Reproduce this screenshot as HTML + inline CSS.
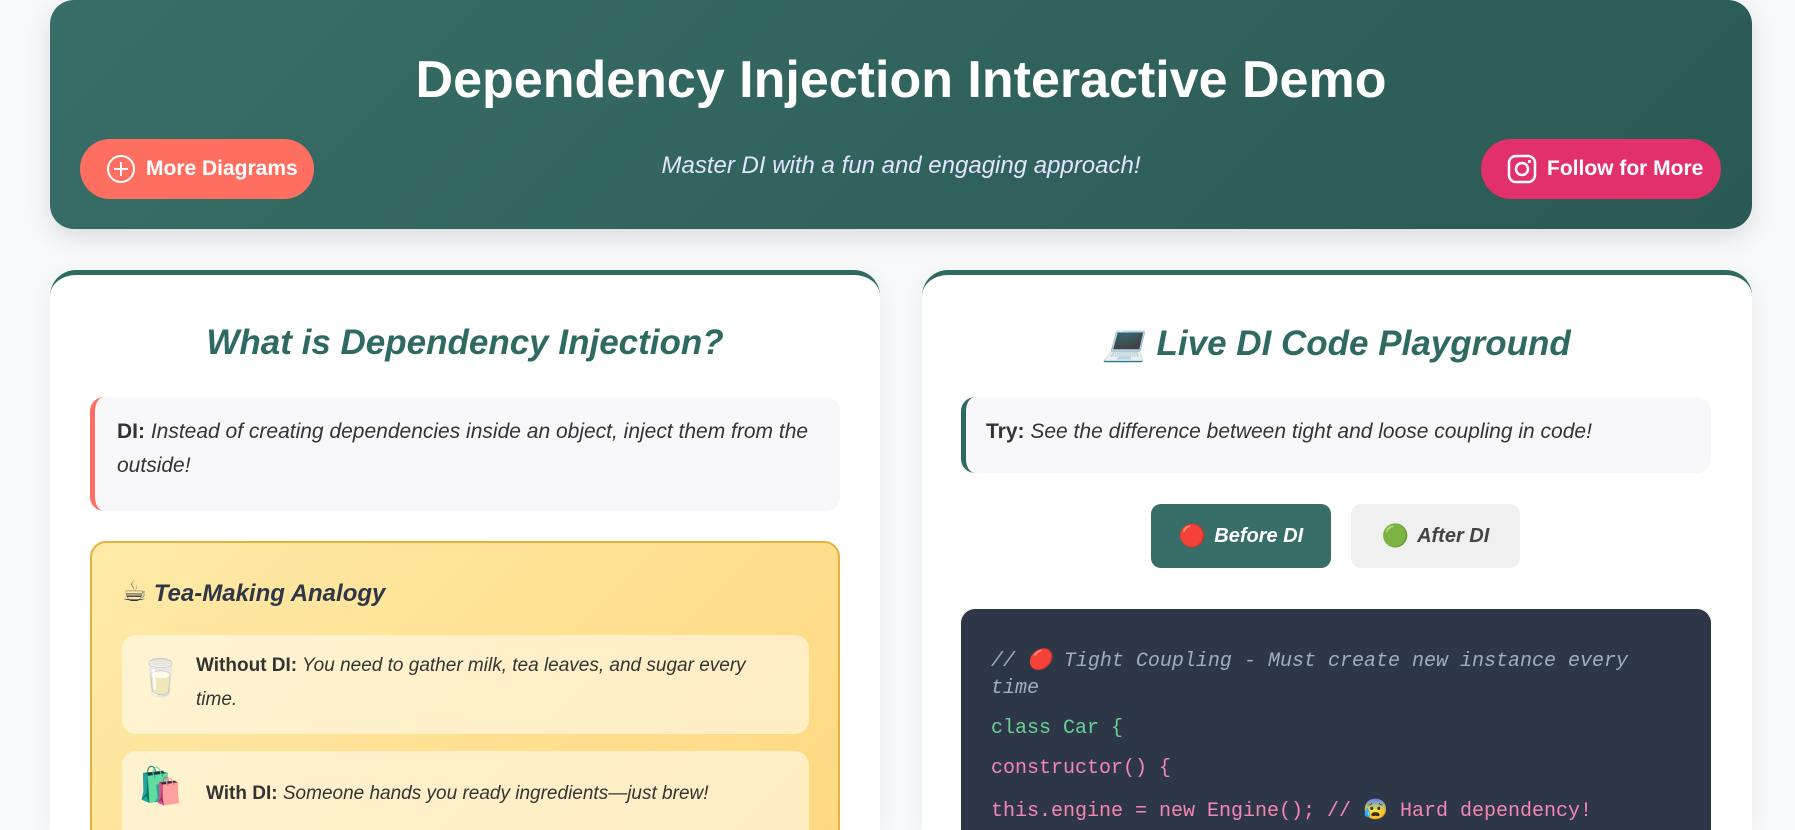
<!DOCTYPE html>
<html style="width:1795px;height:830px;overflow:hidden"><head><meta charset="utf-8"><style>
*{box-sizing:border-box;margin:0;padding:0}
body{width:1795px;height:830px;overflow:hidden;background:#f7f9fb;font-family:"Liberation Sans","DejaVu Sans",sans-serif;position:relative}
.abs{position:absolute}
.header{left:50px;top:0;width:1702px;height:229px;border-radius:24px;background:linear-gradient(135deg,#376e67,#2b5953);box-shadow:0 8px 24px rgba(0,0,0,.12)}
.title{left:0;width:1702px;top:50px;text-align:center;color:#fff;font-weight:bold;font-size:52px}
.btn{height:60px;border-radius:30px;color:#fff;font-weight:bold;font-size:21px;display:flex;align-items:center;gap:10px;padding-left:26px}
.sub{left:0;width:1702px;top:152px;text-align:center;color:#e3e4ff;font-style:italic;font-size:24px}
.card{background:#fff;border-radius:26px 26px 0 0;border-top:5px solid #2f6a62;box-shadow:0 4px 20px rgba(0,0,0,.06);overflow:hidden}
h2{position:absolute;text-align:center;color:#2f6a62;font-size:35px;font-weight:bold;font-style:italic}
.box{background:#f8f8fb;border-radius:14px;font-size:20px;color:#333;line-height:34px;font-style:italic}
.box b{font-style:normal}
.code{background:#2d3748;border-radius:14px 14px 0 0;font-family:"Liberation Mono",monospace;font-size:20px}
.code div{position:absolute;left:30px;white-space:nowrap}
</style></head><body>
<div class="abs header">
 <div class="abs title">Dependency Injection Interactive Demo</div>
 <div class="abs btn" style="left:30px;top:139px;width:234px;background:#ff6f61"><svg width="30" height="30" viewBox="0 0 30 30"><circle cx="15" cy="15" r="13" fill="none" stroke="#fff" stroke-width="2"/><path d="M15 8v14M8 15h14" stroke="#fff" stroke-width="2"/></svg>More Diagrams</div>
 <div class="abs sub">Master DI with a fun and engaging approach!</div>
 <div class="abs btn" style="left:1431px;top:139px;width:240px;background:#e1306c"><svg width="30" height="30" viewBox="0 0 30 30"><rect x="2" y="2" width="26" height="26" rx="7" fill="none" stroke="#fff" stroke-width="2.5"/><circle cx="15" cy="15" r="6" fill="none" stroke="#fff" stroke-width="2.5"/><circle cx="22.5" cy="7.5" r="1.6" fill="#fff"/></svg>Follow for More</div>
</div>

<div class="abs card" style="left:50px;top:270px;width:830px;height:560px">
 <h2 style="left:0;width:830px;top:48px">What is Dependency Injection?</h2>
 <div class="abs box" style="left:40px;top:122px;width:750px;height:114px;border-left:5px solid #ff6f61;padding:18px 30px 0 22px;font-size:21px"><b>DI:</b> Instead of creating dependencies inside an object, inject them from the outside!</div>
 <div class="abs" style="left:40px;top:266px;width:750px;height:400px;border:2px solid #e7b23a;border-radius:16px;background:linear-gradient(135deg,#ffeaa8,#ffd77e)">
  <div class="abs" style="left:30px;top:32px;font-size:24px;font-weight:bold;color:#2d3748;font-style:italic"><span style="font-size:28px;font-style:normal">☕</span> Tea-Making Analogy</div>
  <div class="abs box" style="left:30px;top:92px;width:687px;height:99px;background:rgba(255,255,255,.5);padding:14px 40px 0 74px;font-size:19px;line-height:34px"><span class="abs" style="left:16px;top:26px;font-size:36px;font-style:normal">🥛</span><b>Without DI:</b> You need to gather milk, tea leaves, and sugar every time.</div>
  <div class="abs box" style="left:30px;top:208px;width:687px;height:120px;background:rgba(255,255,255,.5);padding:26px 20px 0 84px;font-size:19px"><span class="abs" style="left:16px;top:18px;font-size:36px;font-style:normal">🛍️</span><b>With DI:</b> Someone hands you ready ingredients—just brew!</div>
 </div>
</div>

<div class="abs card" style="left:922px;top:270px;width:830px;height:560px">
 <h2 style="left:0;width:830px;top:48px">💻 Live DI Code Playground</h2>
 <div class="abs box" style="left:39px;top:122px;width:750px;height:76px;border-left:5px solid #2f6a62;padding:18px 20px 0 20px;font-size:21px"><b>Try:</b> See the difference between tight and loose coupling in code!</div>
 <div class="abs" style="left:229px;top:229px;width:180px;height:64px;border-radius:10px;background:#376e67;color:#fff;font-weight:bold;font-size:20px;display:flex;align-items:center;justify-content:center;gap:8px;font-style:italic"><span style="font-size:22px;font-style:normal">🔴</span>Before DI</div>
 <div class="abs" style="left:429px;top:229px;width:169px;height:64px;border-radius:10px;background:#f0f0f0;color:#444;font-weight:bold;font-size:20px;display:flex;align-items:center;justify-content:center;gap:8px;font-style:italic"><span style="font-size:22px;font-style:normal">🟢</span>After DI</div>
 <div class="abs code" style="left:39px;top:334px;width:750px;height:226px">
  <div style="top:38px;color:#a0aec0;font-style:italic">// 🔴 Tight Coupling - Must create new instance every</div>
  <div style="top:68px;color:#a0aec0;font-style:italic">time</div>
  <div style="top:108px;color:#68d391">class Car {</div>
  <div style="top:148px;color:#f687b3">constructor() {</div>
  <div style="top:188px;color:#f687b3">this.engine = new Engine(); // 😰 Hard dependency!</div>
 </div>
</div>
</body></html>
